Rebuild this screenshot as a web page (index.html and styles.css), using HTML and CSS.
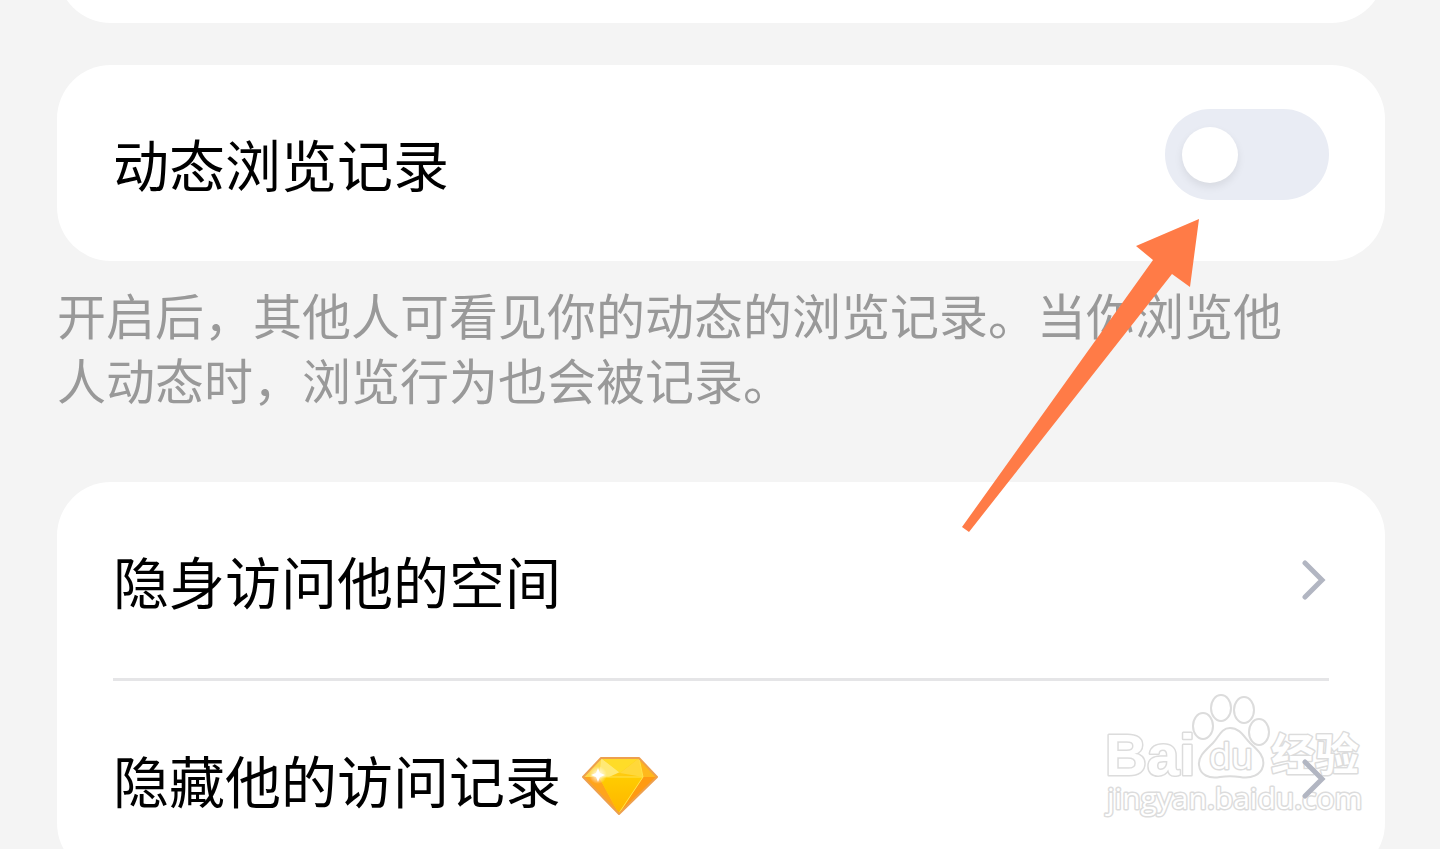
FILE: index.html
```html
<!DOCTYPE html>
<html lang="zh-CN">
<head>
  <meta charset="utf-8">
  <meta name="viewport" content="width=device-width, initial-scale=1">
  <title>动态浏览记录</title>
  <link rel="stylesheet" href="styles.css">
</head>
<body>
  <main class="settings">
    <section class="card card-previous"></section>

    <section class="card">
      <div class="row row-toggle">
        <label class="row-title" for="historyToggle">动态浏览记录</label>
        <input type="checkbox" id="historyToggle" class="switch">
      </div>
    </section>

    <p class="hint">开启后，其他人可看见你的动态的浏览记录。当你浏览他人动态时，浏览行为也会被记录。</p>

    <section class="card">
      <a class="row" href="#space">
        <span class="row-title">隐身访问他的空间</span>
        <svg class="chevron" viewBox="0 0 24 40" aria-hidden="true">
          <path d="M3 3 20 20 3 37"/>
        </svg>
      </a>
      <a class="row" href="#visits">
        <span class="row-title">隐藏他的访问记录</span>
        <svg class="diamond" viewBox="0 0 78 60" aria-hidden="true">
          <defs>
            <linearGradient id="gemTop" x1="0" x2="1">
              <stop offset="0" stop-color="#ffd21f"/>
              <stop offset="1" stop-color="#ffc400"/>
            </linearGradient>
            <linearGradient id="gemFront" x1="0" y1="0" x2="0" y2="1">
              <stop offset="0" stop-color="#ffcc00"/>
              <stop offset="1" stop-color="#ffb400"/>
            </linearGradient>
            <radialGradient id="gemShine">
              <stop offset="0" stop-color="#fff"/>
              <stop offset="1" stop-color="#fff" stop-opacity="0"/>
            </radialGradient>
          </defs>
          <path fill="url(#gemTop)" d="M20 2h38l18 19-38 37L2 21z"/>
          <path fill="#ffd84a" d="M20 2 2 21h16z"/>
          <path fill="#ffe975" d="M20 2 18 21h10l11-5z"/>
          <path fill="#ffdc28" d="M20 2h38L39 17z"/>
          <path fill="#ffd83a" d="M58 2 39 17l23 4z"/>
          <path fill="#ffb81c" d="M58 2l4 19h14z"/>
          <path fill="#ffa41c" d="M2 21h16l20 37z"/>
          <path fill="#ff9a12" d="M76 21H62L38 58z"/>
          <path fill="url(#gemFront)" d="M18 21h44L38 58z"/>
          <path fill="none" stroke="#ffe24e" d="M18 21h44M58 2l4 19-24 36"/>
          <path fill="none" stroke="#eda04e" stroke-width="2" stroke-linejoin="round" d="M20 2h38l18 19-38 37L2 21z"/>
          <circle cx="17" cy="19" r="9" fill="url(#gemShine)"/>
          <path fill="#fff" d="M17 12l2 5 5 2-5 2-2 5-2-5-5-2 5-2z"/>
        </svg>
        <svg class="chevron" viewBox="0 0 24 40" aria-hidden="true">
          <path d="M3 3 20 20 3 37"/>
        </svg>
      </a>

      <svg class="watermark" viewBox="0 0 264 130" aria-hidden="true">
        <text class="mark-name" x="2" y="82">Bai</text>
        <ellipse cx="100" cy="33" rx="10" ry="13"/>
        <ellipse cx="118" cy="15" rx="10" ry="13"/>
        <ellipse cx="141" cy="17" rx="10" ry="13"/>
        <ellipse cx="156" cy="39" rx="10" ry="13"/>
        <path d="M127 35c10 0 14 9 20 15 9 8 15 14 13 23-2 9-12 13-23 11-7-1-13-1-20 0-11 2-20-2-21-12-1-9 7-15 14-22 6-6 8-15 17-15z"/>
        <text class="mark-du" x="106" y="76">du</text>
        <text class="mark-cjk" x="168" y="78">经验</text>
        <text class="mark-url" x="4" y="116">jingyan.baidu.com</text>
      </svg>
    </section>

    <svg class="pointer" viewBox="0 0 240 316" aria-hidden="true">
      <path d="M239 1 176 28l17 14L2 309l7 5L212 56l18 13z"/>
    </svg>
  </main>
</body>
</html>
```
FILE: styles.css
```css
html {
  scrollbar-width: none;
}

body {
  margin: 0;
  background: #f4f4f4;
  color: #000;
  font-family: "Noto Sans CJK SC", sans-serif;
}

.settings {
  position: relative;
  display: flow-root;
  padding: 0 55px 0 57px;
}

.card {
  position: relative;
  background: #fff;
  border-radius: 54px;
}

/* mostly scrolled out of view */
.card-previous {
  height: 196px;
  margin-top: -173px;
  margin-bottom: 42px;
}

.row {
  display: flex;
  align-items: center;
  min-height: 196px;
  margin: 0 56px;
  color: inherit;
  text-decoration: none;
}

.row + .row {
  border-top: 3px solid #e5e5e7;
}

.row-title {
  font-size: 56px;
  line-height: 80px;
}

.row-toggle {
  justify-content: space-between;
}

.switch {
  appearance: none;
  display: flex;
  width: 164px;
  height: 91px;
  margin: 0 0 18px;
  padding: 18px 17px;
  box-sizing: border-box;
  border-radius: 46px;
  background: #e9ecf4;
  cursor: pointer;
}

.switch::before {
  content: "";
  width: 56px;
  height: 56px;
  border-radius: 50%;
  background: #fff;
  box-shadow: 0 4px 8px rgba(0, 0, 0, 0.08);
}

.switch:checked {
  justify-content: flex-end;
  background: #0099ff;
}

.hint {
  margin: 20px 0 71px;
  padding-right: 56px;
  color: #999;
  font-size: 49px;
  line-height: 65px;
}

.chevron {
  position: relative;
  z-index: 1;
  width: 24px;
  height: 40px;
  margin-left: auto;
  margin-right: 3px;
  fill: none;
  stroke: #b2b6c2;
  stroke-width: 5;
  stroke-linecap: round;
}

.diamond {
  width: 78px;
  height: 60px;
  margin-left: 20px;
  margin-top: 14px;
}

.watermark {
  position: absolute;
  right: 18px;
  bottom: 54px;
  width: 264px;
  height: 130px;
  fill: #fff;
  stroke: #dcdcdc;
  stroke-width: 2;
  pointer-events: none;
}

.watermark text {
  paint-order: stroke;
  stroke-width: 3;
  stroke-linejoin: round;
}

.mark-name {
  font: bold 58px "Liberation Sans", sans-serif;
}

.mark-du {
  font: 36px "Open Sans", sans-serif;
}

.mark-cjk {
  font: bold 44px "Noto Sans CJK SC", sans-serif;
}

.mark-url {
  font: 30px "Open Sans", sans-serif;
}

/* arrow pointing at the switch */
.pointer {
  position: absolute;
  top: 218px;
  right: 240px;
  width: 240px;
  height: 316px;
  fill: #ff7b47;
  pointer-events: none;
}
```
